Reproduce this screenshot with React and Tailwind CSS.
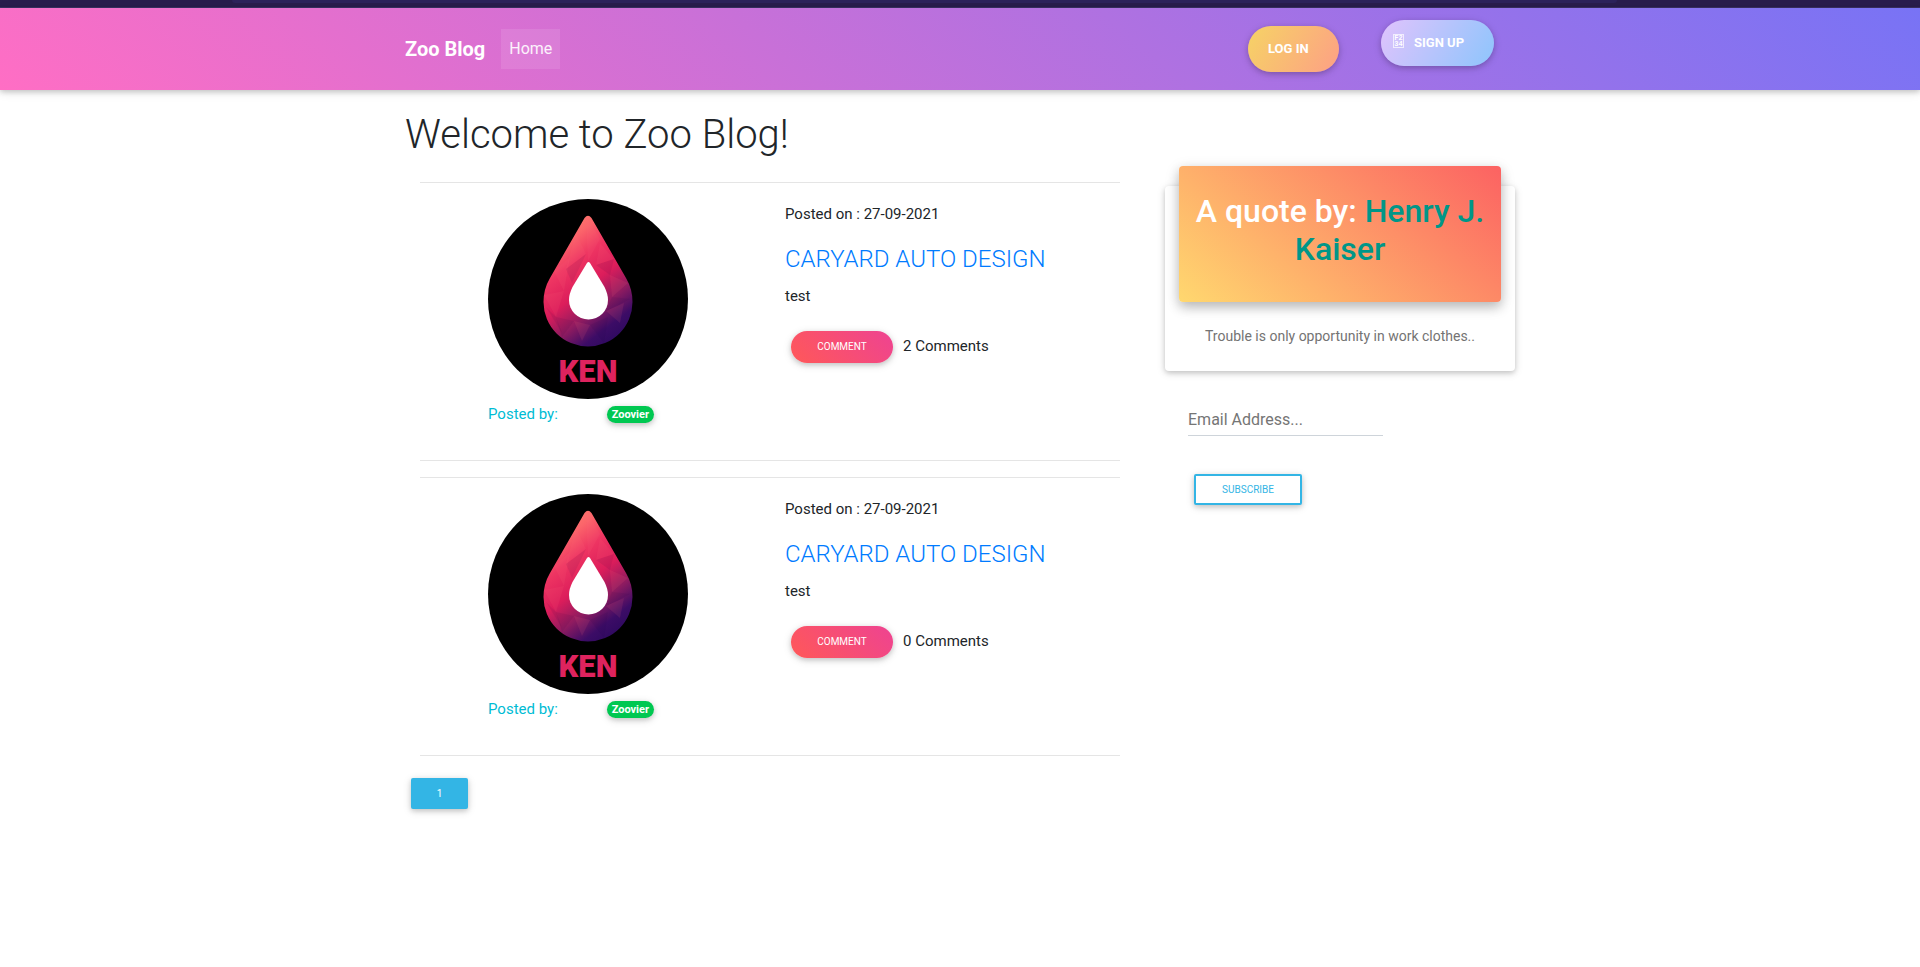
const posts = [
  { id: 1, date: "27-09-2021", title: "CARYARD AUTO DESIGN", body: "test", author: "Zoovier", comments: 2 },
  { id: 2, date: "27-09-2021", title: "CARYARD AUTO DESIGN", body: "test", author: "Zoovier", comments: 0 },
];

const raised = "shadow-[0_2px_5px_0_rgba(0,0,0,0.16),0_2px_10px_0_rgba(0,0,0,0.12)]";

function Logo({ id }) {
  return (
    <svg viewBox="0 0 200 200" className="size-[200px] rounded-full bg-black" role="img" aria-label="Ken logo">
      <defs>
        <linearGradient id={"drop" + id} x1="70" y1="30" x2="150" y2="135" gradientUnits="userSpaceOnUse">
          <stop offset="0" stopColor="#ff7a6e" />
          <stop offset="0.12" stopColor="#fb646a" />
          <stop offset="0.28" stopColor="#ee3562" />
          <stop offset="0.48" stopColor="#dc1d5b" />
          <stop offset="0.66" stopColor="#8e1b60" />
          <stop offset="0.82" stopColor="#3c0c66" />
          <stop offset="1" stopColor="#26085c" />
        </linearGradient>
        <clipPath id={"clip" + id}>
          <path d="M96.500 19 Q100 14.500 103.500 19 L138 79 Q144.500 90 144.500 103 A44.500 44.500 0 0 1 55.500 103 Q55.500 90 62 79 Z" />
        </clipPath>
      </defs>
      <g clipPath={"url(#clip" + id + ")"}>
        <rect x="50" y="10" width="100" height="140" fill={"url(#drop" + id + ")"} />
        <g fill="#ff6a80" fillOpacity="0.11">
          <path d="M88 34 L98 55 L78 70 Z" />
          <path d="M98 17 L112 40 L100 62 Z" />
          <path d="M66 72 L82 58 L76 92 Z" />
          <path d="M56 96 L76 92 L68 118 Z" />
          <path d="M112 44 L126 60 L108 66 Z" />
          <path d="M122 76 L140 84 L124 98 Z" />
          <path d="M86 122 L102 126 L94 142 Z" />
          <path d="M118 112 L136 104 L132 124 Z" />
        </g>
        <g fill="#1c0040" fillOpacity="0.08">
          <path d="M78 70 L98 55 L84 84 Z" />
          <path d="M58 108 L68 118 L74 134 Z" />
          <path d="M108 66 L126 60 L122 76 Z" />
          <path d="M68 118 L86 122 L74 138 Z" />
          <path d="M102 126 L120 118 L116 144 Z" />
          <path d="M124 98 L142 100 L118 112 Z" />
        </g>
      </g>
      <path d="M99 64 Q100.500 62 102 64 L116.500 88 Q120 95 120 101 A19.500 19.500 0 0 1 81 101 Q81 95 84.500 88 Z" fill="#fff" />
      <text x="100" y="183" textAnchor="middle" fill="#de235e" className="font-['Roboto',sans-serif] text-[31px] font-black">
        KEN
      </text>
    </svg>
  );
}

function Post({ post }) {
  return (
    <article className="grid grid-cols-[365px_1fr] border-y border-black/10 pt-4 pb-[34px]">
      <div className="pl-[68px]">
        <Logo id={post.id} />
        <div className="flex w-[166px] items-center justify-between pt-[3px]">
          <span className="text-[15px] leading-6 text-[#00bcd4]">Posted by:</span>
          <span className={"rounded-full bg-[#00c851] px-[5px] text-[11px] leading-[17px] font-bold text-white " + raised}>
            {post.author}
          </span>
        </div>
      </div>
      <div className="text-[15px] leading-6">
        <p className="pt-[3px]">Posted on : {post.date}</p>
        <h2 className="pt-[19px] text-2xl leading-7 font-light text-[#007bff]">
          <a href="#post">{post.title}</a>
        </h2>
        <p className="pt-[11px]">{post.body}</p>
        <div className="flex items-start gap-[10px] pt-[23px] pl-[6px]">
          <button type="button" className={"h-8 w-[102px] rounded-full bg-[linear-gradient(45deg,#ff5858,#ee4392)] text-[10px] text-white " + raised}>
            COMMENT
          </button>
          <span className="pt-[3px]">{post.comments} Comments</span>
        </div>
      </div>
    </article>
  );
}

export default function App() {
  return (
    <div className="bg-white pb-10 font-['Roboto',sans-serif] text-[#212529]">
      <div className="h-2 border-b border-[#3b3163] bg-[#291d4d]">
        <div className="mr-[303px] ml-[232px] h-[3px] rounded-b bg-[#2d235b]" />
      </div>
      <header className="relative bg-[linear-gradient(40deg,#ff6ec4,#7873f5)] shadow-[0_2px_5px_0_rgba(0,0,0,0.16),0_2px_10px_0_rgba(0,0,0,0.12)]">
        <nav className="mx-auto flex h-[82px] max-w-[1110px] items-center">
          <a href="#top" className="text-xl font-bold text-white">Zoo Blog</a>
          <a href="#home" className="ml-4 bg-white/10 px-2 py-2 text-base text-white/90">Home</a>
          <div className="mr-[21px] mb-[6px] ml-auto flex gap-[42px] text-[13px] font-bold text-white">
            <button type="button" className={"mt-[6px] h-[46px] w-[91px] rounded-full bg-[linear-gradient(120deg,#f6d365,#fda085)] pl-5 text-left " + raised}>
              LOG IN
            </button>
            <button type="button" className={"mb-[6px] flex h-[46px] w-[113px] items-center gap-[10px] rounded-full bg-[linear-gradient(120deg,#e0c3fc,#8ec5fc)] pl-3 " + raised}>
              <span aria-hidden="true" className="mb-1 grid w-[11px] border border-white/70 text-center font-['Liberation_Mono',monospace] text-[7px] leading-[6px]">
                <span>F2</span>
                <span>34</span>
              </span>
              SIGN UP
            </button>
          </div>
        </nav>
      </header>
      <main className="mx-auto grid max-w-[1110px] grid-cols-[730px_1fr] gap-[30px]">
        <section className="pt-[21px]">
          <h1 className="text-[40px] leading-[48px] font-light">Welcome to Zoo Blog!</h1>
          <div className="mx-[15px] mt-[23px] grid gap-4">
            {posts.map((post) => (
              <Post key={post.id} post={post} />
            ))}
          </div>
          <button type="button" className={"mt-[22px] ml-[6px] h-[31px] w-[57px] rounded-xs bg-[#33b5e5] text-[10px] text-white " + raised}>
            1
          </button>
        </section>
        <aside className="pt-24">
          <div className={"flex flex-col rounded pb-[18px] " + raised}>
            <h2 className="mx-[14px] -mt-5 rounded bg-[linear-gradient(40deg,#ffd86f,#fc6262)] px-3 pt-[26px] pb-[34px] text-center text-[32px] leading-[38px] font-medium text-white shadow-[0_5px_11px_0_rgba(0,0,0,0.18),0_4px_15px_0_rgba(0,0,0,0.15)]">
              A quote by: <span className="text-[#009688]">Henry J. Kaiser</span>
            </h2>
            <p className="pt-[23px] pb-[5px] text-center text-sm leading-[23px] text-[#747373]">
              Trouble is only opportunity in work clothes..
            </p>
          </div>
          <form className="flex flex-col items-start pt-8 pl-[23px]" onSubmit={(e) => e.preventDefault()}>
            <input
              type="email"
              aria-label="Email Address"
              placeholder="Email Address..."
              className="h-[33px] w-[195px] border-b border-[#ced4da] text-base outline-none placeholder:text-[#757575]"
            />
            <button type="submit" className={"mt-[38px] ml-[6px] h-[31px] w-[108px] rounded-xs border-2 border-[#33b5e5] bg-white text-[10px] text-[#33b5e5] " + raised}>
              SUBSCRIBE
            </button>
          </form>
        </aside>
      </main>
    </div>
  );
}
